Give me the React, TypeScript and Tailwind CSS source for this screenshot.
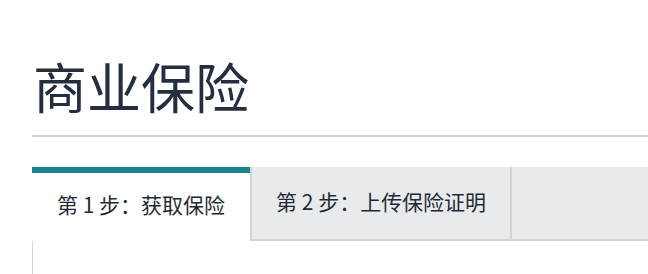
export default function App() {
    const tabs = ['第 1 步：获取保险', '第 2 步：上传保险证明'];

    return (
        <div
            className="h-screen bg-white pl-8 overflow-hidden"
            style={{ fontFamily: '"Noto Sans CJK SC", "Noto Sans", sans-serif' }}
        >
            {/* Title */}
            <h1 className="pt-[49px] pb-[12px] text-[54px] leading-[74px] text-[#232e3e] pl-[1px]">商业保险</h1>
            <div className="h-[2px] bg-[#d3d4d6]" />

            {/* Tabs */}
            <div className="mt-[30px] flex bg-[#e9eaec]">
                <div className="flex h-[74px] items-center border-t-[6px] border-[#168493] bg-white px-[25px] pb-[4px] text-[21px] text-[#1f2a37]">
                    {tabs[0]}
                </div>
                <div className="flex h-[74px] items-center border-l-2 border-r-2 border-b-2 border-[#d3d4d6] px-6 pb-[2px] text-[21px] text-[#1f2a37]">
                    {tabs[1]}
                </div>
                <div className="flex-1 border-b-2 border-[#d3d4d6]" />
            </div>

            {/* Panel */}
            <div className="-mt-[1px] h-[40px] border-l border-t border-[#d3d4d6] bg-white" />
        </div>
    );
}
